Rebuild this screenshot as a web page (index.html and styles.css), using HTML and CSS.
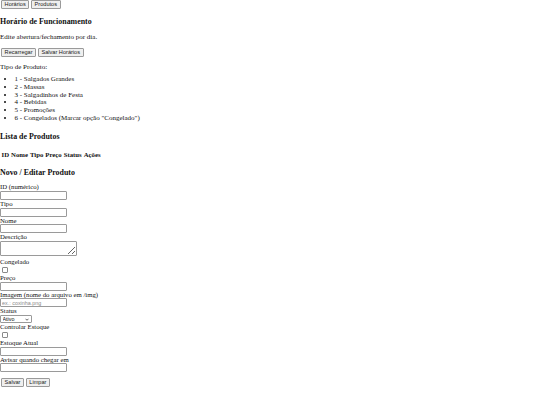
FILE: index.html
```html
<!DOCTYPE html>
<html lang="pt-BR">
<head>
<meta charset="utf-8">
<title>Admin</title>
<link rel="stylesheet" href="styles.css">
</head>
<body class="page">
<nav class="tabs"><button class="btn">Horários</button> <button class="btn">Produtos</button></nav>
<section>
<h3 class="title">Horário de Funcionamento</h3>
<p class="text">Edite abertura/fechamento por dia.</p>
<div class="actions"><button class="btn">Recarregar</button> <button class="btn">Salvar Horários</button></div>
</section>
<section>
<p class="text lead">Tipo de Produto:</p>
<ul class="types">
<li>1 - Salgados Grandes</li>
<li>2 - Massas</li>
<li>3 - Salgadinhos de Festa</li>
<li>4 - Bebidas</li>
<li>5 - Promoções</li>
<li>6 - Congelados (Marcar opção "Congelado")</li>
</ul>
<h3 class="title">Lista de Produtos</h3>
<table class="grid">
<thead><tr><th>ID</th><th>Nome</th><th>Tipo</th><th>Preço</th><th>Status</th><th>Ações</th></tr></thead>
<tbody></tbody>
</table>
<h3 class="title form-title">Novo / Editar Produto</h3>
<form class="form">
<label>ID (numérico)</label><br><input class="field" type="text"><br>
<label>Tipo</label><br><input class="field" type="text"><br>
<label>Nome</label><br><input class="field" type="text"><br>
<label>Descrição</label><br><textarea class="area"></textarea><br>
<label>Congelado</label><br><input class="check" type="checkbox"><br>
<label>Preço</label><br><input class="field" type="text"><br>
<label>Imagem (nome do arquivo em /img)</label><br><input class="field" type="text" placeholder="ex.: coxinha.png"><br>
<label>Status</label><br><span class="sel-wrap"><select class="sel"><option>Ativo</option><option>Inativo</option></select><svg class="chev" width="4" height="3" viewBox="0 0 8 5"><path d="M1 1 L4 4 L7 1" fill="none" stroke="#222" stroke-width="1.4"/></svg></span><br>
<label>Controlar Estoque</label><br><input class="check" type="checkbox"><br>
<label>Estoque Atual</label><br><input class="field" type="text"><br>
<label>Avisar quando chegar em</label><br><input class="field" type="text"><br>
<div class="form-actions"><button class="btn" type="button">Salvar</button> <button class="btn" type="button">Limpar</button></div>
</form>
</section>
</body>
</html>
```
FILE: styles.css
```css
.page {
  margin: 0;
  font-family: "Liberation Serif", serif;
  font-size: 6.75px;
  line-height: 7.8px;
  color: #111;
  background: #fff;
}
.title {
  font-size: 7.9px;
  line-height: 9px;
  margin: 7.9px 0;
}
.form-title {
  margin-bottom: 6px;
}
.text {
  margin: 6.75px 0;
  font-size: 7px;
}
.lead {
  margin-bottom: 0;
}
.types {
  margin: 4.2px 0 9.5px;
  padding-left: 14.5px;
  font-size: 7px;
}
.btn {
  font-family: "Liberation Sans", sans-serif;
  font-size: 5.6px;
  line-height: 7px;
  color: #222;
  height: 9px;
  padding: 0 2.6px;
  margin: 0;
  border: 1px solid #9a9a9a;
  border-radius: 1px;
  background: #efefef;
  vertical-align: top;
}
.tabs {
  padding-left: 1px;
  height: 9px;
}
.actions {
  padding-left: 1px;
  height: 9px;
}
.grid {
  border-spacing: 1px;
}
.grid th {
  padding: 0.5px;
  font-size: 6.75px;
}
.form {
  margin: 0;
}
.field {
  width: 67px;
  height: 9px;
  box-sizing: border-box;
  border: 1px solid #9a9a9a;
  border-radius: 1px;
  padding: 0 1px;
  margin: 0;
  font-family: "Liberation Sans", sans-serif;
  font-size: 5.4px;
  background: #fff;
  vertical-align: top;
}
.field::placeholder {
  color: #8a8a8a;
}
.area {
  width: 77px;
  height: 15px;
  box-sizing: border-box;
  border: 1px solid #9a9a9a;
  border-radius: 1px;
  margin: 0;
  padding: 0;
  font-size: 5px;
  vertical-align: baseline;
}
.check {
  appearance: none;
  box-sizing: border-box;
  width: 6px;
  height: 6px;
  margin: 1px 0 1px 2px;
  border: 1px solid #8a8a8a;
  border-radius: 1px;
  background: #fff;
  vertical-align: top;
}
.sel-wrap {
  position: relative;
  display: inline-block;
  vertical-align: top;
  height: 8px;
}
.sel {
  appearance: none;
  display: block;
  width: 32px;
  height: 8px;
  box-sizing: border-box;
  border: 1px solid #9a9a9a;
  border-radius: 1px;
  font-family: "Liberation Sans", sans-serif;
  font-size: 5.4px;
  line-height: 6px;
  padding: 0 0 0 1.5px;
  margin: 0;
  background: #fff;
  color: #111;
}
.chev {
  position: absolute;
  right: 3px;
  top: 2.5px;
  pointer-events: none;
}
.form-actions {
  margin-top: 5.5px;
  padding-left: 1px;
  height: 9px;
}
```
